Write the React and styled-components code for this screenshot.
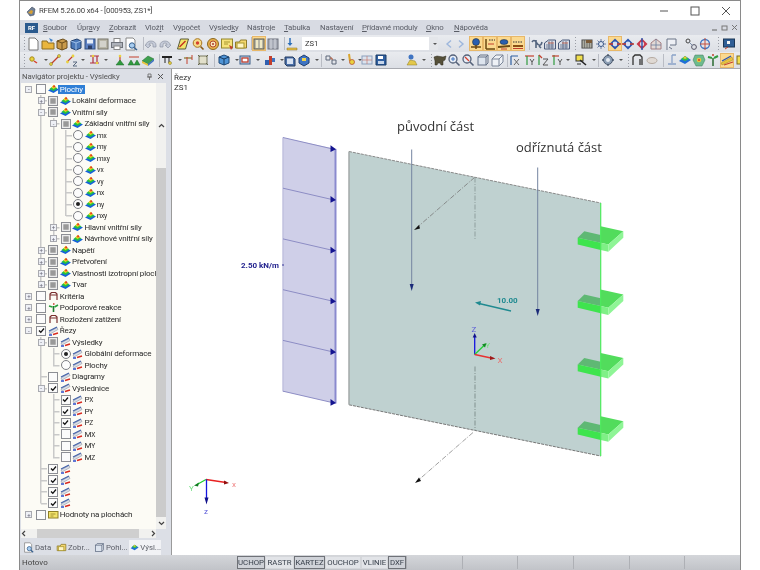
import React from 'react'
import styled, { createGlobalStyle } from 'styled-components'

const Global = createGlobalStyle`
  html, body { margin: 0; padding: 0; background: #fff; }
  body { font-family: Roboto, "Liberation Sans", sans-serif; font-size: 8px; color: #333; }
`

const Window = styled.div`
  margin-left: 19px;
  width: 722px;
  height: 570px;
  box-sizing: border-box;
  border: 1px solid #8a8a8a;
  border-bottom: 0;
  display: flex;
  flex-direction: column;
  overflow: hidden;
  filter: blur(0.35px);
`
const TitleBar = styled.div`
  height: 19px;
  display: flex;
  align-items: center;
  background: #fff;
  padding-left: 5px;
  gap: 2px;
  font-size: 7.8px;
  letter-spacing: -0.2px;
  color: #444;
`
const TitleText = styled.span`
  flex: 1;
`
const WinButton = styled.div`
  width: 29px;
  height: 19px;
  display: flex;
  align-items: center;
  justify-content: center;
`
const MenuBar = styled.div`
  height: 15px;
  background: #d8dbe3;
  display: flex;
  align-items: center;
  padding-left: 4px;
  color: #5a5d66;
  font-size: 7.8px;
  letter-spacing: -0.15px;
`
const MenuLogo = styled.div`
  width: 13px;
  height: 10px;
  background: #2a5a8e;
  color: #fff;
  font-size: 6px;
  font-weight: 700;
  line-height: 10px;
  text-align: center;
  margin: 0 5px 0 1px;
`
const MenuItem = styled.span`
  width: ${p => p.$w}px;
  white-space: nowrap;
`
const MdiButtons = styled.div`
  margin-left: auto;
  display: flex;
  gap: 3px;
  padding-right: 2px;
`
const Toolbar = styled.div`
  height: 17px;
  flex: none;
  display: flex;
  align-items: center;
  padding-left: ${p => p.$left}px;
  background: linear-gradient(#e9ebef, #dcdfe5);
  border-bottom: ${p => (p.$last ? '1px solid #a8aab0' : '0')};
  box-sizing: border-box;
  overflow: hidden;
`
const Slot = styled.div`
  width: ${p => p.$w}px;
  flex: none;
  height: 16px;
  display: flex;
  align-items: center;
`
const ToolBtn = styled.div`
  width: 14px;
  height: 15px;
  flex: none;
  display: flex;
  align-items: center;
  justify-content: center;
  background: ${p => (p.$on ? '#fbd98f' : 'transparent')};
  box-shadow: ${p => (p.$on ? 'inset 0 0 0 1px #e8b869' : 'none')};
`
const Drop = styled.div`
  width: 0;
  height: 0;
  margin-left: 2px;
  border-left: 2px solid transparent;
  border-right: 2px solid transparent;
  border-top: 2px solid #555;
`
const Divider = styled.div`
  width: 1px;
  height: 13px;
  margin-left: 1px;
  background: ${p => (p.$grip ? 'repeating-linear-gradient(#9a9da5 0 1px, transparent 1px 3px)' : '#b9bcc4')};
`
const Combo = styled.div`
  width: 136px;
  height: 13px;
  background: #fff;
  display: flex;
  align-items: center;
  justify-content: space-between;
  padding-left: 3px;
  box-sizing: border-box;
  font-size: 7.6px;
  color: #333;
`
const ComboArrow = styled.div`
  width: 9px;
  height: 13px;
  background: #e4e6ea;
  display: flex;
  align-items: center;
  justify-content: center;
`
const Main = styled.div`
  flex: 1;
  display: flex;
  min-height: 0;
  background: #dcdfe6;
`
const Nav = styled.div`
  width: 146px;
  flex: none;
  display: flex;
  flex-direction: column;
`
const NavHeader = styled.div`
  height: 14px;
  flex: none;
  display: flex;
  align-items: center;
  padding-left: 2px;
  color: #555;
  font-size: 7.8px;
  letter-spacing: -0.1px;
`
const NavTitle = styled.span`
  flex: 1;
`
const NavGlyph = styled.span`
  width: 11px;
  display: flex;
  justify-content: center;
`
const TreeBox = styled.div`
  flex: 1;
  margin-left: 1px;
  min-height: 0;
  display: grid;
  grid-template-columns: minmax(0, 1fr) 10px;
  grid-template-rows: minmax(0, 1fr) 9px;
  background: #fcfbf5;
`
const Tree = styled.div`
  padding-top: 0.5px;
  overflow: hidden;
`
const Row = styled.div`
  height: 11.51px;
  display: flex;
  align-items: center;
  padding-left: 1.7px;
  white-space: nowrap;
  color: #2a2a2a;
  font-size: 8px;
  letter-spacing: -0.15px;
`
const lineColor = '#c9c9c9'
const Cell = styled.div`
  width: 12.3px;
  height: 100%;
  flex: none;
  display: flex;
  align-items: center;
  justify-content: center;
  background:
    ${p => (p.$v === 'full'
      ? `linear-gradient(${lineColor}, ${lineColor}) center top / 1.5px 100% no-repeat`
      : p.$v === 'half'
        ? `linear-gradient(${lineColor}, ${lineColor}) center top / 1.5px 50% no-repeat`
        : 'none')}${p => (p.$h
      ? `, linear-gradient(${lineColor}, ${lineColor}) right center / 50% 1.5px no-repeat`
      : '')};
`
const Expander = styled.div`
  width: 7px;
  height: 7px;
  box-sizing: border-box;
  border: 1px solid #a9aab0;
  background: #eef0f6;
  display: flex;
  align-items: center;
  justify-content: center;
  color: #667;
  font-size: 6px;
  line-height: 1;
`
const Check = styled.div`
  width: 10px;
  height: 10px;
  box-sizing: border-box;
  border: 1px solid #8d8f95;
  background: ${p => (p.$state === 'mixed' ? '#999' : '#fbfbfb')};
  box-shadow: ${p => (p.$state === 'mixed' ? 'inset 0 0 0 1.3px #ececec' : 'none')};
  display: flex;
  align-items: center;
  justify-content: center;
`
const Radio = styled.div`
  width: 10px;
  height: 10px;
  box-sizing: border-box;
  border-radius: 50%;
  border: 1px solid #7c7e84;
  background: #fcfcfc;
  display: flex;
  align-items: center;
  justify-content: center;
  &::after {
    content: '';
    width: 4px;
    height: 4px;
    border-radius: 50%;
    background: ${p => (p.$on ? '#222' : 'transparent')};
  }
`
const NodeIcon = styled.div`
  width: 11px;
  height: 10px;
  flex: none;
  margin-left: 0.5px;
  display: flex;
`
const Label = styled.span`
  padding: 0 2px;
  margin-left: -1px;
  background: ${p => (p.$selected ? '#2f7fd6' : 'transparent')};
  color: ${p => (p.$selected ? '#fff' : 'inherit')};
`
const Small = styled.span`
  font-size: 6.6px;
`
const VScroll = styled.div`
  display: flex;
  flex-direction: column;
  align-items: stretch;
  background: #f1f1ef;
`
const ScrollEnd = styled.div`
  height: ${p => p.$h}px;
  flex: none;
  display: flex;
  align-items: center;
  justify-content: center;
`
const VThumb = styled.div`
  flex: 1;
  background: #cbcbcb;
`
const HScroll = styled.div`
  display: flex;
  background: #f1f1ef;
`
const HThumb = styled.div`
  flex: 1;
  margin: 0 12px 0 11px;
  background: #cfcfcf;
`
const ScrollCorner = styled.div`
  background: #dcdfe6;
`
const TabRow = styled.div`
  height: 17px;
  flex: none;
  display: flex;
  align-items: center;
  padding: 1px 0 0 2px;
  box-sizing: border-box;
  color: #5c5f68;
  font-size: 7.8px;
`
const Tab = styled.div`
  width: ${p => p.$w}px;
  height: 15px;
  flex: none;
  box-sizing: border-box;
  display: flex;
  align-items: center;
  gap: 1px;
  padding-left: 1px;
  background: ${p => (p.$on ? '#f1f2f5' : 'transparent')};
`
const Splitter = styled.div`
  width: 5px;
  flex: none;
  background: #dcdfe6;
`
const Canvas = styled.div`
  flex: 1;
  background: #fff;
  border-left: 1px solid #9a9a9a;
  min-width: 0;
`
const Drawing = styled.svg`
  display: block;
  width: 100%;
  height: 100%;
`
const StatusBar = styled.div`
  height: 15px;
  flex: none;
  display: flex;
  align-items: center;
  background: linear-gradient(#d4d6da, #c1c3c8);
  padding-left: 2px;
  font-size: 8px;
  color: #444;
`
const StatusText = styled.span`
  width: 215px;
`
const StatusBtn = styled.div`
  width: ${p => p.$w}px;
  height: 13px;
  flex: none;
  box-sizing: border-box;
  text-align: center;
  line-height: 12px;
  font-size: 7.8px;
  white-space: nowrap;
  overflow: hidden;
  color: #39404c;
  background: ${p => (p.$down ? '#cfd2d8' : '#e2e4e8')};
  border: 1px solid ${p => (p.$down ? '#6f7278' : '#d4d6da')};
`
const StatusCell = styled.div`
  flex: 1;
  height: 13px;
  border-left: 1px solid #aeb0b5;
`

// toolbar drawings, 14 x 14
const G = {
  page: <path d="M3 1h6l3 3v9H3z" fill="#fff" stroke="#777" />,
  folder: <><path d="M1 4h5l1 2h6v6H1z" fill="#e9b53e" stroke="#8c6c20" /><path d="M8 1l4 2-2 2z" fill="#3f7fc4" /></>,
  box: <><path d="M2 4l6-2 4 2v7l-5 2-5-2z" fill="#c99a4a" stroke="#6c4e1c" /><path d="M2 4l5 2v7M7 6l5-2" fill="none" stroke="#6c4e1c" /></>,
  boxb: <><path d="M2 4l6-2 4 2v7l-5 2-5-2z" fill="#4a78b8" stroke="#22406c" /><path d="M2 4l5 2v7M7 6l5-2" fill="none" stroke="#9fc0e8" /></>,
  save: <><rect x="2" y="2" width="10" height="10" fill="#5d80c2" stroke="#35507f" /><rect x="4" y="2.500" width="6" height="4" fill="#e8eef8" /><rect x="5" y="8.500" width="4" height="3.500" fill="#2d3f66" /></>,
  sheet: <><rect x="2" y="2" width="10" height="10" fill="#b9b6a8" stroke="#77756a" /><path d="M4 5h6M4 7h6M4 9h6" stroke="#eee" /></>,
  print: <><rect x="4" y="1.500" width="6" height="4" fill="#fff" stroke="#888" /><rect x="1.500" y="5.500" width="11" height="5" fill="#aeb2ba" stroke="#70747c" /><rect x="4" y="9" width="6" height="3.500" fill="#fff" stroke="#888" /></>,
  preview: <><path d="M2 1h7l2 2v10H2z" fill="#fff" stroke="#888" /><circle cx="8" cy="8.500" r="2.700" fill="#a8cdf0" stroke="#36608f" /><path d="M10 10.500l3 2.500" stroke="#36608f" strokeWidth="1.500" /></>,
  undo: <path d="M2 8a5 4 0 0 1 10 0v2H9V8a2 2 0 0 0-4 0h2l-3 3-3-3z" fill="#c5cbd8" stroke="#858b9c" strokeWidth=".6" />,
  redo: <path d="M12 8a5 4 0 0 0-10 0v2h3V8a2 2 0 0 1 4 0H7l3 3 3-3z" fill="#c5cbd8" stroke="#858b9c" strokeWidth=".6" />,
  edit: <><path d="M1.500 12l3-10h8l-3 10z" fill="#f2e56b" stroke="#5b5b3a" /><path d="M3.500 10l6-6" stroke="#c3301f" strokeWidth="1.400" /></>,
  mag: <><circle cx="6.500" cy="6" r="4.300" fill="#f6dc8a" stroke="#a8741e" /><circle cx="6.500" cy="6" r="1.700" fill="#d5402f" /><path d="M9.500 9.500l3 3" stroke="#8a5a14" strokeWidth="1.600" /></>,
  target: <><circle cx="7" cy="7" r="5.500" fill="#e8b04a" stroke="#8c6820" /><circle cx="7" cy="7" r="3" fill="#f8e7bc" stroke="#b44a30" /><circle cx="7" cy="7" r="1" fill="#b03a2e" /></>,
  note: <><rect x="1.500" y="2" width="11" height="9" fill="#f5e27a" stroke="#94862c" /><path d="M4 5h6M4 7h4" stroke="#a8962e" /><path d="M9 8l4 2-2 3z" fill="#c3402e" /></>,
  notes: <><path d="M1.500 5h4l1-2h6v8h-11z" fill="#f5d86e" stroke="#8f7c2c" /><rect x="3" y="6" width="7" height="5" fill="#fff5c4" stroke="#a8962e" /></>,
  split: <><rect x="2" y="2" width="10" height="10" fill="#b7b6a6" stroke="#5e5d50" /><rect x="4" y="3" width="2" height="8" fill="#efe9c5" /><rect x="8" y="3" width="2" height="8" fill="#efe9c5" /></>,
  splitg: <><rect x="2" y="2" width="10" height="10" fill="#a9adb8" stroke="#6c707c" /><path d="M5 2v10M9 2v10" stroke="#d6d9e0" /></>,
  loadcase: <><path d="M5 1v6" stroke="#2d6fb8" strokeWidth="1.500" /><path d="M2.500 6L5 9l2.500-3z" fill="#2d6fb8" /><path d="M2 11h10v2H2z" fill="#e8c14a" stroke="#8a6f1a" strokeWidth=".5" /></>,
  left: <path d="M9 3.500L5 7l4 3.500" fill="none" stroke="#9db6dc" strokeWidth="1.400" />,
  right: <path d="M5 3.500L9 7l-4 3.500" fill="none" stroke="#9db6dc" strokeWidth="1.400" />,
  beamA: <><circle cx="7" cy="5" r="3.500" fill="#2a5fae" stroke="#123" strokeWidth=".5" /><path d="M2 10h10M7 8v4" stroke="#6e4a12" strokeWidth="1.500" /></>,
  beamB: <><path d="M3 2v10M3 12h9" stroke="#6e4a12" strokeWidth="1.500" /><path d="M6 3h6" stroke="#333" strokeWidth="1.200" strokeDasharray="1.500 1" /><path d="M5 7h6" stroke="#c3402e" /></>,
  beamC: <><ellipse cx="7" cy="5" rx="4" ry="2.500" fill="#2a5fae" stroke="#123" strokeWidth=".5" /><path d="M1 10l12-1" stroke="#6e4a12" strokeWidth="1.800" /><path d="M4 12h6" stroke="#c3402e" /></>,
  beamD: <><path d="M2 5h10" stroke="#333" strokeWidth="1.200" strokeDasharray="1.500 1" /><path d="M2 9h10" stroke="#8a4f12" strokeWidth="2" /><path d="M2 11.500h10" stroke="#c3402e" /></>,
  coil: <path d="M2 5q2-3 4 0t3 3q2 1 3-3M6 3v8M9 9l2 2" fill="none" stroke="#53647f" strokeWidth="1.600" />,
  rack: <><path d="M1.500 12V6l4-3h7v9z" fill="#d9dde6" stroke="#4a5a7a" /><path d="M3 8h8M3 10h8M6 4v8M9 4v8" stroke="#4a5a7a" strokeWidth=".7" /><path d="M5 6h6" stroke="#b5472e" strokeWidth=".8" /></>,
  mesh: <><rect x="2" y="3" width="10" height="8" fill="#d2d0c0" stroke="#444" /><path d="M2 5h10M2 7h10M2 9h10M4.500 3v8M7 3v8M9.500 3v8" stroke="#555" strokeWidth=".6" /><rect x="6" y="3" width="6" height="3" fill="#7a5a38" /></>,
  star: <><path d="M2 7h10M7 2v10M3.500 3.500l7 7M10.500 3.500l-7 7" stroke="#6a7da0" /><circle cx="7" cy="7" r="2.500" fill="#dfe6f2" stroke="#3a5686" /></>,
  blueRed: <><path d="M7 1.500l5.500 5.500L7 12.500 1.500 7z" fill="#2a55b0" /><circle cx="7" cy="7" r="2.400" fill="#d8dff0" /><path d="M1 7h4M9 7h4" stroke="#c63a2e" strokeWidth="1.400" /></>,
  redBlue: <><path d="M7 1.500l5.500 5.500L7 12.500 1.500 7z" fill="#c8384a" /><circle cx="7" cy="7" r="2.200" fill="#e6d8dc" /><path d="M7 1v12" stroke="#2a55b0" strokeWidth="1.400" /></>,
  house: <><path d="M2 12V6l5-4 5 4v6z" fill="#e3d9d6" stroke="#a37e82" /><path d="M2 8h10M7 2v10" stroke="#6a7da0" strokeWidth=".8" /></>,
  flag: <><path d="M3 13V2h9v6H6" fill="#eef0f5" stroke="#6b7487" /><path d="M5 10l3 2" stroke="#6b7487" /></>,
  chain: <><circle cx="4" cy="4" r="2" fill="none" stroke="#444" /><circle cx="10" cy="10" r="2.400" fill="none" stroke="#556" /><path d="M5.500 5.500l3 3" stroke="#7a8ca8" /></>,
  circ: <><circle cx="7" cy="7" r="4.500" fill="none" stroke="#3f74c2" strokeWidth="1.300" /><path d="M7 1v12M2 7h10" stroke="#c5513e" /></>,
  monitor: <><rect x="1.500" y="2" width="11" height="8" fill="#2f5e96" stroke="#1b3656" /><rect x="5" y="4" width="3" height="3" fill="#f4f4f4" /><path d="M3 12l3-2" stroke="#c3402e" /></>,
  cut: <path d="M3 12l4-7 3 7M5 8h4" fill="none" stroke="#c3402e" strokeWidth="1.400" />,
  node: <><circle cx="6" cy="6" r="2.200" fill="#e9d33e" stroke="#a88a1a" /><path d="M8 8l3 2" stroke="#d5402f" strokeWidth="1.500" /></>,
  line: <><path d="M3 11L11 3" stroke="#c3402e" strokeWidth="1.200" /><circle cx="3" cy="11" r="1.500" fill="#e9d33e" stroke="#7a6a20" strokeWidth=".5" /><circle cx="11" cy="3" r="1.500" fill="#e9d33e" stroke="#7a6a20" strokeWidth=".5" /></>,
  lines: <><path d="M2 9L8 3" stroke="#c3402e" strokeWidth="1.100" /><circle cx="2.500" cy="9" r="1.400" fill="#e9d33e" /><circle cx="8" cy="3" r="1.400" fill="#e9d33e" /><path d="M8 9h4l-4 4h4" fill="none" stroke="#5a6a80" /></>,
  frame: <><path d="M3 3h9M6 3v7M10 3v7M3 10h9" stroke="#b02f3e" strokeWidth="1.200" /><circle cx="6" cy="3" r="1.200" fill="#e9d33e" /><circle cx="10" cy="10" r="1.200" fill="#e9d33e" /></>,
  sup: <><path d="M7 2v6" stroke="#c3402e" strokeWidth="1.200" /><path d="M3 12l4-5 4 5z" fill="#2f9a3e" stroke="#1d6a28" strokeWidth=".5" /><circle cx="7" cy="3" r="1.300" fill="#e9d33e" /></>,
  sups: <><path d="M1 12l3-5 3 5zM7 12l3-5 3 5z" fill="#2f9a3e" stroke="#1d6a28" strokeWidth=".5" /><path d="M2 4h10" stroke="#c3402e" /></>,
  slab: <><path d="M1 8l6-5 6 3-6 5z" fill="#3fa04f" stroke="#1d6a28" strokeWidth=".5" /><path d="M1 8l6 3v2L1 10z" fill="#e9c43e" /><path d="M7 11l6-5v2l-6 5z" fill="#3f74c2" /></>,
  tee: <><path d="M2 4h10" stroke="#222" strokeWidth="2" /><path d="M5 4v6M9 4v6" stroke="#222" /><circle cx="10" cy="10" r="1.500" fill="#e9d33e" stroke="#7a6a20" strokeWidth=".5" /></>,
  bar: <><path d="M2 5h8" stroke="#a9a478" strokeWidth="2" /><path d="M5 4v7M10 2v5" stroke="#c3402e" strokeWidth="1" /></>,
  grate: <><rect x="3" y="3" width="8" height="8" fill="#e2e0cb" stroke="#7a7a60" /><path d="M2 2l2 2M12 2l-2 2M2 12l2-2M12 12l-2-2" stroke="#66664a" /></>,
  solid: <><path d="M2 4l5-2 5 2v6l-5 2-5-2z" fill="#4f94d6" stroke="#1f4a7a" /><path d="M2 4l5 2 5-2M7 6v6" fill="none" stroke="#173a60" /></>,
  redBox: <><rect x="2" y="3" width="10" height="8" fill="#b9d0e8" stroke="#3a5c86" /><rect x="4" y="5" width="6" height="4" fill="#fff" stroke="#c3402e" strokeWidth="1.300" /></>,
  mix: <><path d="M2 7h4v5H2z" fill="#2f5fb0" /><path d="M6 3h3v9H6z" fill="#c3402e" /><path d="M9 5h3v4H9z" fill="#3f74c2" /></>,
  cube: <><path d="M2 4h8l2 2v7H4l-2-2z" fill="#4a6fa8" stroke="#223a60" /><rect x="4" y="5.500" width="6" height="5.500" fill="#d9e3f2" /></>,
  cubeY: <><path d="M2 5l5-3 5 3v5l-5 3-5-3z" fill="#3f74c2" stroke="#203f70" /><rect x="5" y="5" width="4" height="3" fill="#f2d44a" /></>,
  arrows: <><path d="M2 3h4v4H2zM8 7h4v4H8z" fill="none" stroke="#5c6678" /><path d="M6 5h2v2" fill="none" stroke="#a14a2e" /></>,
  yellowRed: <><path d="M6 1l1 7" stroke="#d9a52e" strokeWidth="2" /><circle cx="9" cy="9" r="2.500" fill="#e9d33e" stroke="#b0402e" strokeWidth=".7" /></>,
  pale: <><rect x="2" y="3" width="10" height="8" fill="#dbe3ee" stroke="#8ca0bd" /><path d="M2 7h10M7 3v8" stroke="#c87a6e" strokeWidth=".7" /></>,
  dbBlue: <><path d="M2 2h10v10H2z" fill="#2f5fa0" stroke="#193a66" /><rect x="4" y="3" width="5" height="3" fill="#fff" /><rect x="4" y="8" width="6" height="3" fill="#c7d6ea" /></>,
  userY: <><circle cx="6" cy="4" r="2.500" fill="#3f74c2" /><path d="M2 12l3-5 5 1 2 4z" fill="#e3c84a" stroke="#8a7a28" strokeWidth=".5" /></>,
  rhino: <path d="M1 4l3-1 6 1 3-1-1 4-2 1v4H8l-1-2H5l-1 2H2V8z" fill="#55503a" stroke="#2d2a1c" strokeWidth=".5" />,
  zoomR: <><circle cx="6" cy="6" r="4" fill="#e6ecf5" stroke="#55627a" strokeWidth="1.300" /><path d="M9 9l3.500 3.500" stroke="#55627a" strokeWidth="1.600" /><path d="M6 4v4M4 6h4" stroke="#3f74c2" /></>,
  zoomX: <><circle cx="6" cy="6" r="4" fill="#e6ecf5" stroke="#55627a" strokeWidth="1.300" /><path d="M9 9l3.500 3.500" stroke="#55627a" strokeWidth="1.600" /><path d="M4 4l4 4" stroke="#d5402f" strokeWidth="1.300" /></>,
  wire: <><rect x="2" y="4" width="8" height="8" fill="#dde4ee" stroke="#667388" /><path d="M2 4l2-2h8v8l-2 2M10 4l2-2" fill="none" stroke="#667388" /></>,
  wire2: <path d="M2 6h7v7H2zM2 6l4-4h7v7l-4 4M9 6l4-4" fill="#eef1f6" stroke="#7a8598" />,
  axX: <><path d="M3 3h7M3 3v9" stroke="#2f5fa0" strokeWidth="1.200" /><path d="M6 6l5 6M11 6l-5 6" stroke="#666" strokeWidth="1" /></>,
  axY: <><path d="M2 3h9" stroke="#c3402e" strokeWidth="1.200" /><path d="M4 3v9" stroke="#2f9a3e" strokeWidth="1.200" /><path d="M7 6l2 3 2-3M9 9v3" fill="none" stroke="#555" /></>,
  axZ: <><path d="M3 2v10" stroke="#2f9a3e" strokeWidth="1.200" /><path d="M3 2l3 3" stroke="#c3402e" strokeWidth="1.200" /><path d="M7 6h5l-5 6h5" fill="none" stroke="#555" /></>,
  axI: <><path d="M4 2v10" stroke="#2f9a3e" strokeWidth="1.200" /><path d="M2 3h7" stroke="#c3402e" strokeWidth="1.200" /><path d="M8 6l2 3 2-3M10 9v3" fill="none" stroke="#555" /></>,
  marker: <><rect x="2" y="2" width="7" height="6" fill="#f0df4e" stroke="#333" /><path d="M6 7l6 5" stroke="#222" strokeWidth="1.600" /><path d="M3 11h4" stroke="#333" /></>,
  gear: <><circle cx="7" cy="7" r="4.500" fill="#8ea0b6" stroke="#4a586c" /><circle cx="7" cy="7" r="2" fill="#e6ebf2" /><path d="M7 1v2M1 7h2M11 7h2M7 11v2" stroke="#4a586c" strokeWidth="1.400" /></>,
  arch: <path d="M3 12V4l2-2h5l2 2v8M10 12V6" fill="none" stroke="#333" strokeWidth="1.300" />,
  cloud: <ellipse cx="7" cy="7.500" rx="5" ry="3" fill="#dfd9d4" stroke="#b5a9a0" />,
  pipe: <path d="M7 2h4M7 2v8M3 11h8" fill="none" stroke="#8ba3c8" strokeWidth="1.300" />,
  rainbow: <><path d="M1 8l6-5 6 4-6 4z" fill="#1f6fd6" /><path d="M3 6l4-3 4 3-4 2z" fill="#2fc04a" /><path d="M5 5l2-2 2 2-2 1z" fill="#f0c92e" /></>,
  contour: <><path d="M3 2h8l2 5-3 6H4L1 7z" fill="#6dbb8e" stroke="#3d7a58" strokeWidth=".5" /><circle cx="7" cy="7" r="2.300" fill="#e9c43e" /><circle cx="7" cy="7" r="1" fill="#d5402f" /></>,
  tree: <><path d="M7 5v8" stroke="#2a6a30" strokeWidth="1.500" /><path d="M2 4l4 1M12 3L8 5" stroke="#2f9a3e" strokeWidth="2" /><path d="M6 2h2" stroke="#c3402e" strokeWidth="1.500" /></>,
  section: <><path d="M1 10L12 4l1 3L2 12z" fill="#e9c43e" stroke="#8a6f1a" strokeWidth=".4" /><path d="M2 8l9-5" stroke="#2a55b0" strokeWidth="1.300" /><path d="M4 12l9-3" stroke="#c3402e" strokeWidth="1.300" /></>,
  hint: <rect x="3" y="3" width="8" height="8" fill="#f0df4e" stroke="#7a6a20" />,
}

const tools1 = [
  ['div', 23, 1], ['page', 33], ['folder', 48], ['box', 62], ['boxb', 76], ['save', 90], ['sheet', 103], ['print', 117], ['preview', 131], ['div', 142],
  ['undo', 151], ['redo', 165], ['div', 176], ['edit', 183], ['mag', 198], ['target', 213], ['note', 227], ['notes', 241], ['div', 250],
  ['split', 259, 0, 1], ['splitg', 273], ['div', 283], ['loadcase', 292], ['combo', 309],
  ['left', 449], ['right', 461], ['beamA', 476, 0, 1], ['beamB', 490, 0, 1], ['beamC', 504, 0, 1], ['beamD', 518, 0, 1], ['div', 528],
  ['coil', 537], ['rack', 550], ['rack', 564], ['div', 574, 1], ['mesh', 587], ['star', 601], ['blueRed', 615, 0, 1], ['blueRed', 628], ['redBlue', 642], ['house', 656], ['flag', 671], ['div', 683],
  ['chain', 691], ['circ', 705], ['div', 717, 1], ['monitor', 729], ['cut', 745],
]
const tools2 = [
  ['div', 23, 1], ['node', 33], ['drop', 44], ['line', 55], ['lines', 72], ['drop', 81], ['frame', 94], ['drop', 104], ['div', 113],
  ['sup', 120], ['sups', 134], ['slab', 148], ['div', 158], ['tee', 167], ['drop', 178], ['bar', 189], ['grate', 203], ['div', 213],
  ['solid', 224], ['drop', 235], ['redBox', 245], ['drop', 256], ['mix', 270], ['drop', 280], ['cube', 290], ['cubeY', 304], ['drop', 315], ['div', 320],
  ['arrows', 331], ['drop', 341], ['yellowRed', 350], ['drop', 358], ['pale', 367], ['dbBlue', 381], ['userY', 412], ['drop', 422], ['div', 430, 1],
  ['rhino', 440], ['zoomR', 454], ['zoomX', 468], ['wire', 483], ['wire2', 497], ['div', 506],
  ['axX', 515], ['axY', 530], ['axZ', 543], ['axI', 557], ['drop', 566], ['marker', 581], ['drop', 592], ['div', 597],
  ['gear', 608], ['drop', 619], ['div', 627, 1], ['arch', 637], ['cloud', 652], ['div', 662], ['pipe', 672], ['rainbow', 685], ['contour', 699], ['tree', 713], ['section', 727, 0, 1], ['hint', 741],
]

function ToolRow({ items, last }) {
  const base = items[0][1]
  return (
    <Toolbar $left={base - 20} $last={last}>
      {items.map((it, i) => {
        const [kind, x, grip, on] = it
        const next = items[i + 1] ? items[i + 1][1] : x + 20
        // the icon is centred on x, so each slot runs up to the next centre
        const nudge = kind === 'div' ? 0 : kind === 'drop' ? 2 : 7
        const nextKind = items[i + 1] ? items[i + 1][0] : 'page'
        const nextNudge = nextKind === 'div' ? 0 : nextKind === 'drop' ? 2 : 7
        const w = next - nextNudge - (x - nudge)
        return (
          <Slot key={i} $w={w}>
            {kind === 'div' && <Divider $grip={grip} />}
            {kind === 'drop' && <Drop />}
            {kind === 'combo' && (
              <Combo>
                ZS1
                <ComboArrow><Drop /></ComboArrow>
              </Combo>
            )}
            {kind !== 'div' && kind !== 'drop' && kind !== 'combo' && (
              <ToolBtn $on={on}>
                <svg width="14" height="14" viewBox="0 0 14 14">{G[kind]}</svg>
              </ToolBtn>
            )}
          </Slot>
        )
      })}
    </Toolbar>
  )
}

// before, underlined letter, after, slot width
const menus = [
  ['', 'S', 'oubor', 34], ['Úpr', 'a', 'vy', 32], ['', 'Z', 'obrazit', 36], ['Vlož', 'i', 't', 28], ['Vý', 'p', 'očet', 36], ['Výsled', 'k', 'y', 38],
  ['Nás', 't', 'roje', 37], ['', 'T', 'abulka', 36], ['Nasta', 'v', 'ení', 42], ['', 'P', 'řídavné moduly', 64], ['', 'O', 'kno', 28], ['', 'N', 'ápověda', 50],
]

function NodeGlyph({ kind }) {
  return (
    <svg width="11" height="10" viewBox="0 0 11 10">
      {kind === 'dome' && (
        <>
          <path d="M0 6.500L5.500 3 11 5.500 5.500 9z" fill="#1763d8" />
          <path d="M1.500 5L5.500 1.500 9.500 4.500 5.500 7z" fill="#25c33f" />
          <path d="M3.500 3.500L5.500 .8 8 3.500 5.500 5z" fill="#f5d21f" />
          <path d="M5 2L6.500 1 7.500 3 5.500 3.500z" fill="#e0382a" />
        </>
      )}
      {kind === 'cut' && (
        <>
          <path d="M1 6L9 1.500l1 2L2 8z" fill="#d9dee8" stroke="#7a8496" strokeWidth=".5" />
          <path d="M1 5l8-4" stroke="#3f5fa8" strokeWidth="1.100" />
          <path d="M1 9h3" stroke="#1e3fc8" strokeWidth="1.400" />
          <path d="M5 8.500l5-1.500" stroke="#d8291e" strokeWidth="1.400" />
        </>
      )}
      {kind === 'arch' && <path d="M2 9V3l1.500-1.500h4L9 3v6M2 4h7" fill="none" stroke="#7a3030" strokeWidth="1.200" />}
      {kind === 'support' && (
        <>
          <path d="M5.500 3v6" stroke="#1f7a30" strokeWidth="1.600" />
          <path d="M1 3l3.500 1M10 2L6.500 4" stroke="#27a03c" strokeWidth="1.600" />
          <path d="M5 1h1.500" stroke="#c8362a" strokeWidth="1.400" />
        </>
      )}
      {kind === 'note' && (
        <>
          <rect x=".5" y="1.500" width="9.500" height="6.500" fill="#f3e36a" stroke="#8f7f26" />
          <path d="M2.500 4h5M2.500 6h3" stroke="#8f7f26" strokeWidth=".8" />
        </>
      )}
    </svg>
  )
}

// g: columns with a running tree line, last: the connector ends on this row
const t = (level, text, opts = {}) => ({ level, text, ...opts })
const dome = { icon: 'dome', check: 'mixed' }
const cut = { icon: 'cut', check: 'on' }
const rows = [
  t(0, 'Plochy', { icon: 'dome', check: 'off', exp: '-', selected: true }),
  t(1, 'Lokální deformace', { ...dome, exp: '+' }),
  t(1, 'Vnitřní síly', { ...dome, exp: '-' }),
  t(2, 'Základní vnitřní síly', { ...dome, exp: '-', g: [1] }),
  ...[['m', 'x'], ['m', 'y'], ['m', 'xy'], ['v', 'x'], ['v', 'y'], ['n', 'x'], ['n', 'y'], ['n', 'xy']].map(([a, b], i) =>
    t(3, a, { sub: b, icon: 'dome', radio: true, on: i === 6, g: [1, 2], last: i === 7 })),
  t(2, 'Hlavní vnitřní síly', { ...dome, exp: '+', g: [1] }),
  t(2, 'Návrhové vnitřní síly', { ...dome, exp: '+', g: [1], last: true }),
  t(1, 'Napětí', { ...dome, exp: '+' }),
  t(1, 'Přetvoření', { ...dome, exp: '+' }),
  t(1, 'Vlastnosti izotropní plocl', { ...dome, exp: '+' }),
  t(1, 'Tvar', { ...dome, exp: '+', last: true }),
  t(0, 'Kritéria', { icon: 'arch', check: 'off', exp: '+' }),
  t(0, 'Podporové reakce', { icon: 'support', check: 'off', exp: '+' }),
  t(0, 'Rozložení zatížení', { icon: 'arch', check: 'off', exp: '+' }),
  t(0, 'Řezy', { ...cut, exp: '-' }),
  t(1, 'Výsledky', { icon: 'cut', check: 'mixed', exp: '-' }),
  t(2, 'Globální deformace', { icon: 'cut', radio: true, on: true, g: [1] }),
  t(2, 'Plochy', { icon: 'cut', radio: true, g: [1], last: true }),
  t(1, 'Diagramy', { icon: 'cut', check: 'off' }),
  t(1, 'Výslednice', { ...cut, exp: '-' }),
  ...[['P', 'X', 1], ['P', 'Y', 1], ['P', 'Z', 1], ['M', 'X', 0], ['M', 'Y', 0], ['M', 'Z', 0]].map(([a, b, c], i) =>
    t(2, a, { sub: b, icon: 'cut', check: c ? 'on' : 'off', g: [1], last: i === 5 })),
  t(1, '', cut), t(1, '', cut), t(1, '', cut), t(1, '', { ...cut, last: true }),
  t(0, 'Hodnoty na plochách', { icon: 'note', check: 'off', exp: '+' }),
]

function TreeRow({ row }) {
  const { level, text, sub, icon, check, radio, on, exp, selected, g = [], last } = row
  const lead = []
  for (let i = 0; i < level; i++) lead.push(<Cell key={i} $v={g.includes(i) ? 'full' : 'none'} />)
  const own = level === 0 ? 'none' : last ? 'half' : 'full'
  return (
    <Row>
      {lead}
      <Cell $v={own} $h={level > 0}>
        {exp && <Expander>{exp}</Expander>}
      </Cell>
      <Cell>
        {radio ? <Radio $on={on} /> : (
          <Check $state={check}>
            {check === 'on' && (
              <svg width="7" height="7" viewBox="0 0 7 7">
                <path d="M1 3.500l1.800 1.800L6 1.500" fill="none" stroke="#111" strokeWidth="1.300" />
              </svg>
            )}
          </Check>
        )}
      </Cell>
      <NodeIcon><NodeGlyph kind={icon} /></NodeIcon>
      {text && <Label $selected={selected}>{text}{sub && <Small>{sub}</Small>}</Label>}
    </Row>
  )
}

const tabY = [0, 63.3, 126.7, 190]

function Tab3D({ dy }) {
  return (
    <g transform={`translate(0 ${dy})`}>
      <path d="M577.700 238.300L584.300 231.700L600.700 235.500V243.300z" fill="#5fb874" />
      <path d="M600.700 226.700L623.300 231.700L608.300 245L600.700 243.300z" fill="#52dc5c" />
      <path d="M577.700 238.300L600.700 243.300V250.500L577.700 245z" fill="#3ee44e" />
      <path d="M600.700 243.300L608.300 245V252.300L600.700 250.500z" fill="#7ff086" />
      <path d="M608.300 245L623.300 231.700V238.300L608.300 252.300z" fill="#8ff596" />
    </g>
  )
}

function Model() {
  const loadLines = [138, 188.7, 239.4, 290.2, 340.9, 391.7]
  return (
    <Drawing viewBox="172 70 568 485">
      <text x="174" y="80" fontSize="8" fill="#333">Řezy</text>
      <text x="174" y="90" fontSize="8" fill="#333">ZS1</text>

      <path d="M282.700 138L336 149.400V404L282.700 391.700z" fill="#cfcfe8" />
      <path d="M283 138V392" stroke="#bcbcdc" strokeWidth="1.200" />
      <path d="M335.500 149.400V404" stroke="#8a8ace" strokeWidth="2" />
      {loadLines.map(y => (
        <g key={y}>
          <path d={`M283 ${y}L332 ${y + 11.300}`} stroke="#8585c0" strokeWidth=".9" />
          <path d={`M330.500 ${y + 7.800}L336 ${y + 11.800}L330.500 ${y + 14.500}z`} fill="#141490" />
        </g>
      ))}
      <text x="241" y="268" fontSize="8" fontWeight="700" fill="#23238f">2.50 kN/m</text>
      <circle cx="283" cy="265.500" r=".8" fill="#23238f" />

      <path d="M349 152L600.700 203.500V456.500L349 405.300z" fill="#bfd1d0" />
      <path d="M349 152L600.700 203.500" stroke="#8a8a8a" strokeWidth="1" strokeDasharray="3 1" />
      <path d="M349 405.300L600.700 456.500" stroke="#777" strokeWidth="1" strokeDasharray="3 1" />
      <path d="M349 152V405.300" stroke="#a3a9a8" strokeWidth="1.500" />
      {tabY.map(dy => <Tab3D key={dy} dy={dy} />)}
      <path d="M600.700 203.500V456.500" stroke="#4bea5a" strokeWidth="1.200" />

      <path d="M411.700 150V286" stroke="#7484a0" strokeWidth="1" />
      <path d="M409.700 284.500H413.700L411.700 291.500z" fill="#1a2a78" />
      <path d="M537.700 168V311" stroke="#7484a0" strokeWidth="1" />
      <path d="M535.700 309.500H539.700L537.700 316.500z" fill="#1a2a78" />
      <path d="M474.500 178L417 228" stroke="#777" strokeWidth=".8" strokeDasharray="5 1.500 1 1.500" />
      <path d="M414 230.500L419 225.500L420 229z" fill="#111" />
      <path d="M475 178V241" stroke="#8a9a98" strokeWidth=".9" strokeDasharray="5 1.500 1 1.500" />
      <path d="M475 367V431" stroke="#7a8a88" strokeWidth=".9" strokeDasharray="5 1.500 1 1.500" />
      <path d="M473 433L418 481" stroke="#888" strokeWidth=".8" strokeDasharray="5 1.500 1 1.500" />
      <path d="M415 483.500L419 478L421 481.500z" fill="#111" />

      <path d="M511 311.500L479 304" stroke="#1f8a90" strokeWidth="1.300" />
      <path d="M475 303L481 301.500L480 306z" fill="#1f8a90" />
      <text x="497" y="303" fontSize="8" fontWeight="700" fill="#1f8a90">10.00</text>

      <path d="M474.700 355V337" stroke="#1414e0" strokeWidth="1.300" />
      <path d="M472.700 338L474.700 333.500L476.700 338z" fill="#10108a" />
      <text x="471.500" y="332" fontSize="8" fill="#5a5ad8">Z</text>
      <path d="M474.700 355L484 346" stroke="#22d036" strokeWidth="1.300" />
      <path d="M482 345L486.500 343.500L485 348z" fill="#0f8a20" />
      <text x="485.500" y="348" fontSize="7.500" fill="#6fe07a">Y</text>
      <path d="M474.700 355L491 358.500" stroke="#e83030" strokeWidth="1.300" />
      <path d="M490 356.500L495.500 359L490 360.500z" fill="#a01818" />
      <text x="497.500" y="363.500" fontSize="8" fill="#e87070">X</text>

      <path d="M206 480L226 483" stroke="#e82020" strokeWidth="1.300" />
      <path d="M224 481L229 483.500L224 485z" fill="#901010" />
      <text x="232" y="487" fontSize="8" fill="#f08080">x</text>
      <path d="M206 480L197 485" stroke="#20d030" strokeWidth="1.300" />
      <path d="M199 483L194 486L198 487z" fill="#0f7a20" />
      <text x="189" y="491" fontSize="8" fill="#70e080">Y</text>
      <path d="M206.500 480V499" stroke="#1414e0" strokeWidth="1.300" />
      <path d="M204.500 498H208.500L206.500 505z" fill="#10108a" />
      <text x="204" y="514" fontSize="8" fill="#5a5ad8">z</text>

      <text x="397" y="131" fontFamily="Open Sans" fontSize="13" fill="#333">původní část</text>
      <text x="516" y="152" fontFamily="Open Sans" fontSize="13" fill="#333">odříznutá část</text>
    </Drawing>
  )
}

const ArrowUp = () => <svg width="7" height="5" viewBox="0 0 7 5"><path d="M1 4l2.500-2.500L6 4" fill="none" stroke="#444" strokeWidth="1.200" /></svg>
const ArrowDown = () => <svg width="7" height="5" viewBox="0 0 7 5"><path d="M1 1l2.500 2.500L6 1" fill="none" stroke="#444" strokeWidth="1.200" /></svg>
const ArrowLeft = () => <svg width="5" height="7" viewBox="0 0 5 7"><path d="M4 1L1.500 3.500 4 6" fill="none" stroke="#444" strokeWidth="1.200" /></svg>
const ArrowRight = () => <svg width="5" height="7" viewBox="0 0 5 7"><path d="M1 1l2.500 2.500L1 6" fill="none" stroke="#444" strokeWidth="1.200" /></svg>

const statusButtons = [['UCHOP', 28, true], ['RASTR', 29, false], ['KARTEZ', 31, true], ['OUCHOP', 36, false], ['VLINIE', 27, false], ['DXF', 18, true]]

export default function App() {
  return (
    <>
      <Global />
      <Window>
        <TitleBar>
          <svg width="12" height="12" viewBox="0 0 12 12">
            <path d="M2 7l5-5 3 2-1 6-4 1z" fill="#6f7f96" stroke="#3f4a5c" strokeWidth=".6" />
            <path d="M3 8l3-3 2 1-1 3z" fill="#d8a032" />
          </svg>
          <TitleText>RFEM 5.26.00 x64 - [000953, ZS1*]</TitleText>
          <WinButton><svg width="10" height="10" viewBox="0 0 10 10"><path d="M1 5h8" stroke="#555" strokeWidth="1" /></svg></WinButton>
          <WinButton><svg width="10" height="10" viewBox="0 0 10 10"><rect x="1" y="1" width="8" height="8" fill="none" stroke="#555" /></svg></WinButton>
          <WinButton><svg width="10" height="10" viewBox="0 0 10 10"><path d="M1 1l8 8M9 1l-8 8" stroke="#555" /></svg></WinButton>
        </TitleBar>
        <MenuBar>
          <MenuLogo>RF</MenuLogo>
          {menus.map(([pre, u, post, w]) => (
            <MenuItem key={post} $w={w}>{pre}<u>{u}</u>{post}</MenuItem>
          ))}
          <MdiButtons>
            <svg width="7" height="7" viewBox="0 0 7 7"><path d="M1 6h5" stroke="#777" strokeWidth="1.200" /></svg>
            <svg width="7" height="7" viewBox="0 0 7 7"><rect x="1" y="2" width="5" height="4" fill="none" stroke="#777" /></svg>
            <svg width="7" height="7" viewBox="0 0 7 7"><path d="M1 1l5 5M6 1L1 6" stroke="#777" /></svg>
          </MdiButtons>
        </MenuBar>
        <ToolRow items={tools1} />
        <ToolRow items={tools2} last />
        <Main>
          <Nav>
            <NavHeader>
              <NavTitle>Navigátor projektu - Výsledky</NavTitle>
              <NavGlyph>
                <svg width="7" height="7" viewBox="0 0 7 7"><path d="M2 1h3v3H2zM1 4h5M3.500 4v3" fill="none" stroke="#666" strokeWidth=".8" /></svg>
              </NavGlyph>
              <NavGlyph>
                <svg width="7" height="7" viewBox="0 0 7 7"><path d="M1 1l5 5M6 1L1 6" stroke="#555" /></svg>
              </NavGlyph>
            </NavHeader>
            <TreeBox>
              <Tree>{rows.map((r, i) => <TreeRow key={i} row={r} />)}</Tree>
              <VScroll>
                <ScrollEnd $h={85}><ArrowUp /></ScrollEnd>
                <VThumb />
                <ScrollEnd $h={12}><ArrowDown /></ScrollEnd>
              </VScroll>
              <HScroll>
                <ScrollEnd $h={9}><ArrowLeft /></ScrollEnd>
                <HThumb />
                <ScrollEnd $h={9}><ArrowRight /></ScrollEnd>
              </HScroll>
              <ScrollCorner />
            </TreeBox>
            <TabRow>
              <Tab $w={33}><svg width="11" height="11" viewBox="0 0 14 14">{G.preview}</svg>Data</Tab>
              <Tab $w={38}><svg width="11" height="11" viewBox="0 0 14 14">{G.notes}</svg>Zobr...</Tab>
              <Tab $w={36}><svg width="11" height="11" viewBox="0 0 14 14">{G.wire}</svg>Pohl...</Tab>
              <Tab $w={32} $on><svg width="11" height="11" viewBox="0 0 14 14">{G.rainbow}</svg>Výsl...</Tab>
            </TabRow>
          </Nav>
          <Splitter />
          <Canvas><Model /></Canvas>
        </Main>
        <StatusBar>
          <StatusText>Hotovo</StatusText>
          {statusButtons.map(([label, w, down]) => (
            <StatusBtn key={label} $w={w} $down={down}>{label}</StatusBtn>
          ))}
          <StatusCell />
          <StatusCell />
          <StatusCell />
          <StatusCell />
          <StatusCell />
          <StatusCell />
        </StatusBar>
      </Window>
    </>
  )
}
